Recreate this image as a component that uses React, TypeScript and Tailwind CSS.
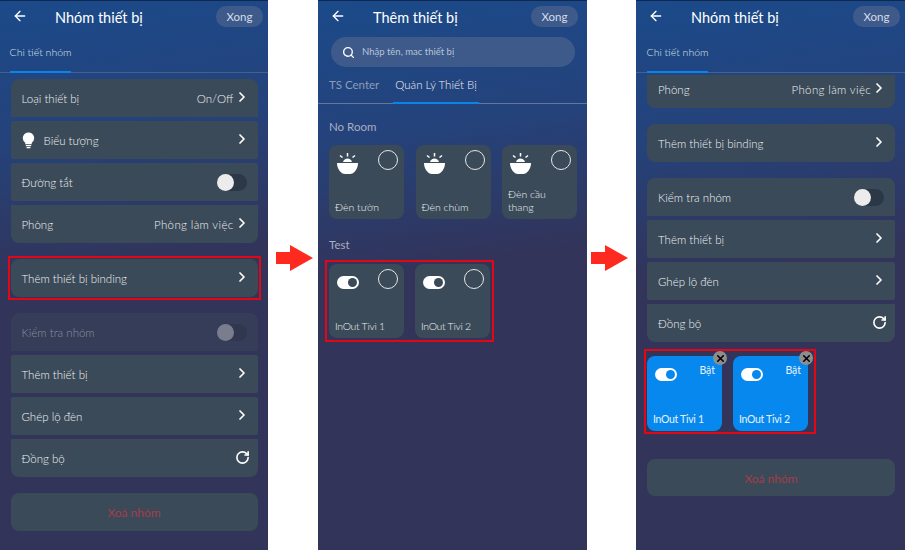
import type { ReactNode } from 'react'
import { ArrowLeft, ChevronRight, RotateCw, Search, X } from 'lucide-react'

const Chevron = () => <ChevronRight className="-mr-[3px] mb-[2px] h-[16px] w-[16px] text-white" strokeWidth={2.600} />

const Refresh = () => <RotateCw className="-mr-[3px] mb-[2px] h-[15px] w-[15px] text-white" strokeWidth={2.600} />

function LampIcon() {
  return (
    <svg viewBox="0 0 21 21" className="h-[21px] w-[21px]" fill="white">
      <path d="M0 10h21c0 6-4 11-8 11H8c-4 0-8-5-8-11z" />
      <path d="M6 9c.5-2 2.500-3.500 4.500-3.500S14.500 7 15 9z" />
      <path d="M10.500 0v3.500M3 2.500l2.500 2M18 2.500l-2.500 2" stroke="white" strokeWidth="1.500" fill="none" />
    </svg>
  )
}

function BulbIcon() {
  return (
    <svg viewBox="0 0 16 20" className="h-[17px] w-[13px]" fill="white">
      <path d="M8 0a7 7 0 0 0-4 12.700V14.500h8v-1.800A7 7 0 0 0 8 0z" />
      <rect x="4.500" y="15.500" width="7" height="1.600" rx=".8" />
      <rect x="5.500" y="18" width="5" height="1.600" rx=".8" />
    </svg>
  )
}

function ToggleOn({ dot }: { dot: string }) {
  return (
    <div className="flex h-[13px] w-[22px] items-center justify-end rounded-full bg-white pr-[2px]">
      <div className={`h-[9px] w-[9px] rounded-full ${dot}`} />
    </div>
  )
}

function Switch({ dim }: { dim?: boolean }) {
  return (
    <div className={`flex h-[17px] w-[30px] items-center rounded-full ${dim ? 'bg-[#30374f]' : 'bg-[#2c3848]'}`}>
      <div className={`h-[17px] w-[17px] rounded-full ${dim ? 'bg-[#7a7d8e]' : 'bg-[#ececec]'}`} />
    </div>
  )
}

function Row({
  label,
  right,
  icon,
  className = 'h-[38px] rounded-[2px]',
  dim,
}: {
  label: string
  right?: ReactNode
  icon?: ReactNode
  className?: string
  dim?: boolean
}) {
  return (
    <div className={`flex items-center justify-between pl-[11px] pr-[11px] ${dim ? 'bg-[#353d58] text-[#8a8fa2]' : 'bg-[#3a4a58] text-[#eef0f3]'} ${className}`}>
      <div className="flex items-center gap-[9px]">
        {icon}
        <span className="pt-[2px]">{label}</span>
      </div>
      {right}
    </div>
  )
}

function ValueRight({ value, wide }: { value: string; wide?: boolean }) {
  return (
    <div className="flex items-center">
      <span className={`pt-[2px] ${wide ? 'tracking-[0.35px]' : ''}`}>{value}</span>
      <Chevron />
    </div>
  )
}

function Header({ title, right = 'pr-[5px]' }: { title: string; right?: string }) {
  return (
    <div className={`flex h-[34px] items-start pl-[12px] pt-[5px] ${right}`}>
      <ArrowLeft className="mt-[2px] h-[16px] w-[16px] text-white" strokeWidth={2} />
      <div className="ml-[27px] flex-1 pt-[1px] text-[14.500px] font-normal leading-[22px] text-white">{title}</div>
      <div className="flex h-[21px] w-[47px] items-center justify-center rounded-[10px] bg-[#3d5a8b] text-[11.500px] font-normal text-[#d6dce8]">
        Xong
      </div>
    </div>
  )
}

function Panel({ children, width = 'w-[268px]' }: { children: ReactNode; width?: string }) {
  return (
    <div className={`flex h-[550px] shrink-0 flex-col overflow-hidden border-t border-[#10284f] bg-[linear-gradient(172deg,#1b4a8a_0%,#25427a_25%,#32345a_48%,#32345a_100%)] text-[11.500px] font-light ${width}`}>
      {children}
    </div>
  )
}

function DetailTab({ left = 'ml-[10px]' }: { left?: string }) {
  return (
    <div className="mt-[1px] h-[37px] border-b border-[#46608c]">
      <div className={`flex h-[37px] w-[61px] items-center justify-center border-b-2 border-[#0a84e6] pb-[1px] text-[10.500px] whitespace-nowrap text-[#dde3ec] ${left}`}>
        Chi tiết nhóm
      </div>
    </div>
  )
}

function DeviceCard({ name, icon, tight }: { name: string; icon: ReactNode; tight?: boolean }) {
  return (
    <div className="flex h-[74px] w-[75px] shrink-0 flex-col justify-between rounded-[8px] bg-[#3a4a58] pb-[5px] pl-[6px] pr-[6px] pt-[5px] text-[10.500px] leading-[13px] text-[#eef0f3]">
      <div className="flex items-start justify-between">
        <div className="pl-[2px] pt-[3px]">{icon}</div>
        <div className="h-[20px] w-[20px] rounded-full border border-[#e6e6e6]" />
      </div>
      <div className={tight ? 'tracking-[-0.3px]' : ''}>{name}</div>
    </div>
  )
}

function ActiveCard({ name }: { name: string }) {
  return (
    <div className="relative flex h-[75px] w-[75px] shrink-0 flex-col justify-between rounded-[8px] bg-[#0788ee] pb-[5px] pl-[6px] pr-[7px] pt-[8px] text-[10.500px] font-normal leading-[13px] text-[#e6f2fc]">
      <div className="flex items-start justify-between">
        <div className="pl-[2px] pt-[4px]">
          <ToggleOn dot="bg-[#0788ee]" />
        </div>
        <span>Bật</span>
      </div>
      <div className="tracking-[-0.3px]">{name}</div>
      <div className="absolute -right-[5px] -top-[5px] flex h-[14px] w-[14px] items-center justify-center rounded-full bg-[#8d8d8d]">
        <X className="h-[11px] w-[11px] text-black" strokeWidth={3.500} />
      </div>
    </div>
  )
}

function Arrow({ className }: { className: string }) {
  return (
    <div className={`flex shrink-0 justify-center pt-[245px] ${className}`}>
      <svg viewBox="0 0 37 26" className="h-[26px] w-[37px]" fill="#ff2a1f">
        <polygon points="0,7 14,7 14,0 37,13 14,26 14,19 0,19" />
      </svg>
    </div>
  )
}

export default function App() {
  return (
    <div className="flex h-[551px] w-[905px] overflow-hidden bg-white font-['Lato',sans-serif]">
      {/* man hinh 1 */}
      <Panel>
        <Header title="Nhóm thiết bị" />
        <DetailTab />
        <div className="flex flex-col px-[10.500px] pt-[6px]">
          <div className="flex flex-col gap-[4px]">
            <Row label="Loại thiết bị" className="h-[38px] rounded-t-[8px]" right={<ValueRight value="On/Off" />} />
            <Row label="Biểu tượng" icon={<BulbIcon />} right={<Chevron />} />
            <Row label="Đường tắt" right={<Switch />} />
            <Row label="Phòng" className="h-[38px] rounded-b-[8px]" right={<ValueRight value="Phòng làm việc" wide />} />
          </div>
          <div className="mt-[16px] outline-2 outline-offset-[1px] outline-[#e30613]">
            <Row label="Thêm thiết bị binding" className="h-[38px] rounded-[8px]" right={<Chevron />} />
          </div>
          <div className="mt-[16px] flex flex-col gap-[4px]">
            <Row label="Kiểm tra nhóm" dim className="h-[38px] rounded-t-[8px]" right={<Switch dim />} />
            <Row label="Thêm thiết bị" right={<Chevron />} />
            <Row label="Ghép lộ đèn" right={<Chevron />} />
            <Row label="Đồng bộ" className="h-[38px] rounded-b-[8px]" right={<Refresh />} />
          </div>
          <div className="mt-[16px] flex h-[38px] items-center justify-center rounded-[8px] bg-[#3a4a58] pt-[2px] text-[12px] font-normal text-[#a63c4a]">
            Xoá nhóm
          </div>
        </div>
      </Panel>

      <Arrow className="w-[50px] pl-[3px]" />

      {/* man hinh 2 */}
      <Panel width="w-[269px]">
        <Header title="Thêm thiết bị" right="pr-[9px]" />
        <div className="ml-[13px] mr-[12px] mt-[2px] flex h-[30px] items-center gap-[7px] rounded-full bg-[#3d5a8b] pl-[11px] text-[9.500px] font-normal text-[#b8c3d6]">
          <Search className="h-[13px] w-[13px] text-white" strokeWidth={2.500} />
          Nhập tên, mac thiết bị
        </div>
        <div className="mt-[5px] flex h-[32px] gap-[14px] border-b border-[#62779c] pl-[11px] text-[11.500px]">
          <div className="flex h-[32px] w-[50px] items-center whitespace-nowrap pb-[7px] font-normal text-[#8e9cb6]">TS Center</div>
          <div className="flex h-[32px] w-[86px] items-center justify-center whitespace-nowrap border-b-2 border-[#0a84e6] pb-[5px] text-[#eef0f3]">
            Quản Lý Thiết Bị
          </div>
        </div>
        <div className="pl-[11px]">
          <div className="mt-[14px] font-normal text-[#a9aec0]">No Room</div>
          <div className="mt-[10px] flex gap-[11.500px]">
            <DeviceCard name="Đèn tườn" icon={<LampIcon />} />
            <DeviceCard name="Đèn chùm" icon={<LampIcon />} />
            <DeviceCard name="Đèn cầu thang" icon={<LampIcon />} />
          </div>
          <div className="mt-[17px] font-normal text-[#a9aec0]">Test</div>
          <div className="mt-[10px] flex w-[161px] gap-[11px] outline-2 outline-offset-[2px] outline-[#e30613]">
            <DeviceCard name="InOut Tivi 1" tight icon={<div className="pt-[4px]"><ToggleOn dot="bg-[#3a4a58]" /></div>} />
            <DeviceCard name="InOut Tivi 2" tight icon={<div className="pt-[4px]"><ToggleOn dot="bg-[#3a4a58]" /></div>} />
          </div>
        </div>
      </Panel>

      <Arrow className="w-[49px] pr-[4px]" />

      {/* man hinh 3 */}
      <Panel width="w-[269px]">
        <Header title="Nhóm thiết bị" />
        <DetailTab left="ml-[11px]" />
        <div className="flex flex-col pl-[11px] pr-[10px] pt-[2px]">
          <Row label="Phòng" className="h-[33px] rounded-b-[8px] pb-[5px]" right={<ValueRight value="Phòng làm việc" wide />} />
          <Row label="Thêm thiết bị binding" className="mt-[16px] h-[38px] rounded-[8px]" right={<Chevron />} />
          <div className="mt-[16px] flex flex-col gap-[4px]">
            <Row label="Kiểm tra nhóm" className="h-[38px] rounded-t-[8px]" right={<Switch />} />
            <Row label="Thêm thiết bị" right={<Chevron />} />
            <Row label="Ghép lộ đèn" right={<Chevron />} />
            <Row label="Đồng bộ" className="h-[38px] rounded-b-[8px]" right={<Refresh />} />
          </div>
          <div className="-ml-[1px] mt-[9px] flex w-[168px] gap-[11px] pb-[1px] pl-[1px] pr-[6px] pt-[5px] outline-2 outline-[#e30613]">
            <ActiveCard name="InOut Tivi 1" />
            <ActiveCard name="InOut Tivi 2" />
          </div>
          <div className="mt-[27px] flex h-[37px] items-center justify-center rounded-[8px] bg-[#3a4a58] pt-[2px] text-[12px] font-normal text-[#a63c4a]">
            Xoá nhóm
          </div>
        </div>
      </Panel>
    </div>
  )
}
